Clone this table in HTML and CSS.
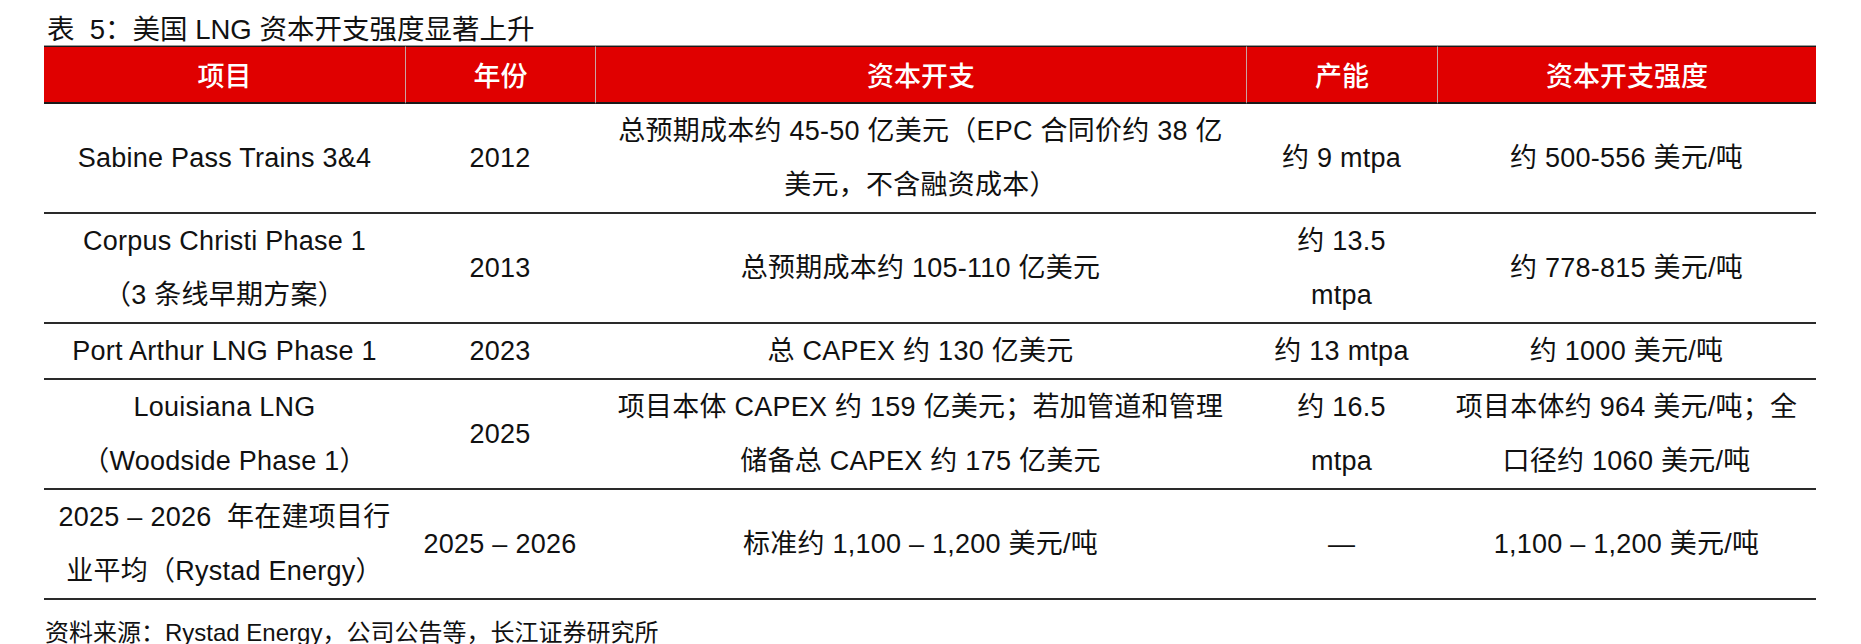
FILE: index.html
```html
<!DOCTYPE html>
<html lang="zh-CN">
<head>
<meta charset="utf-8">
<title>美国 LNG 资本开支强度显著上升</title>
<link rel="stylesheet" href="styles.css">
</head>
<body>
<div class="page">
  <div class="title">表&nbsp;&nbsp;5：美国 LNG 资本开支强度显著上升</div>
  <table class="tbl">
    <colgroup>
      <col class="c1"><col class="c2"><col class="c3"><col class="c4"><col class="c5">
    </colgroup>
    <thead>
      <tr>
        <th>项目</th>
        <th>年份</th>
        <th>资本开支</th>
        <th>产能</th>
        <th>资本开支强度</th>
      </tr>
    </thead>
    <tbody>
      <tr>
        <td>Sabine Pass Trains 3&amp;4</td>
        <td>2012</td>
        <td>总预期成本约 45-50 亿美元（EPC 合同价约 38 亿<br>美元，不含融资成本）</td>
        <td>约 9 mtpa</td>
        <td>约 500-556 美元/吨</td>
      </tr>
      <tr>
        <td>Corpus Christi Phase 1<br>（3 条线早期方案）</td>
        <td>2013</td>
        <td>总预期成本约 105-110 亿美元</td>
        <td>约 13.5<br>mtpa</td>
        <td>约 778-815 美元/吨</td>
      </tr>
      <tr>
        <td>Port Arthur LNG Phase 1</td>
        <td>2023</td>
        <td>总 CAPEX 约 130 亿美元</td>
        <td>约 13 mtpa</td>
        <td>约 1000 美元/吨</td>
      </tr>
      <tr>
        <td>Louisiana LNG<br>（Woodside Phase 1）</td>
        <td>2025</td>
        <td>项目本体 CAPEX 约 159 亿美元；若加管道和管理<br>储备总 CAPEX 约 175 亿美元</td>
        <td>约 16.5<br>mtpa</td>
        <td>项目本体约 964 美元/吨；全<br>口径约 1060 美元/吨</td>
      </tr>
      <tr>
        <td>2025 – 2026&nbsp; 年在建项目行<br>业平均（Rystad Energy）</td>
        <td>2025 – 2026</td>
        <td>标准约 1,100 – 1,200 美元/吨</td>
        <td>—</td>
        <td>1,100 – 1,200 美元/吨</td>
      </tr>
    </tbody>
  </table>
  <div class="source">资料来源：Rystad Energy，公司公告等，长江证券研究所</div>
</div>
</body>
</html>
```

FILE: styles.css
```css
html, body {
  margin: 0;
  padding: 0;
  background: #ffffff;
}

.page {
  width: 1861px;
  height: 644px;
  overflow: hidden;
  padding-left: 44px;
  box-sizing: border-box;
}

.title {
  padding-top: 15px;
  padding-left: 3px;
  height: 30px;
  line-height: 30px;
  font-family: "Liberation Sans", "Noto Sans CJK SC", sans-serif;
  font-size: 27.5px;
  color: #111111;
  white-space: nowrap;
}

.tbl {
  width: 1772px;
  table-layout: fixed;
  border-collapse: separate;
  border-spacing: 0;
  border-top: 1px solid #9a9a9a;
}

.c1 { width: 361px; }
.c2 { width: 190px; }
.c3 { width: 651px; }
.c4 { width: 191px; }
.c5 { width: 379px; }

.tbl th {
  background: #e00000;
  color: #ffffff;
  font-family: "Noto Sans CJK SC", sans-serif;
  font-weight: 500;
  font-size: 27px;
  height: 55px;
  line-height: 55px;
  padding: 0;
  text-align: center;
  border-top: 1px solid #1a1a1a;
  border-bottom: 2px solid #1a1a1a;
  border-left: 1px solid #c9a3a3;
  box-sizing: content-box;
}

.tbl th:first-child {
  border-left: none;
}

.tbl td {
  font-family: "Liberation Sans", "Noto Sans CJK SC", sans-serif;
  font-size: 27px;
  line-height: 54px;
  letter-spacing: 0.25px;
  color: #111111;
  padding: 0;
  text-align: center;
  vertical-align: middle;
  white-space: nowrap;
  border-bottom: 2px solid #2a2a2a;
}

.source {
  padding-top: 18px;
  padding-left: 1px;
  font-family: "Liberation Sans", "Noto Sans CJK SC", sans-serif;
  font-size: 24px;
  line-height: 30px;
  color: #111111;
  white-space: nowrap;
}
```
